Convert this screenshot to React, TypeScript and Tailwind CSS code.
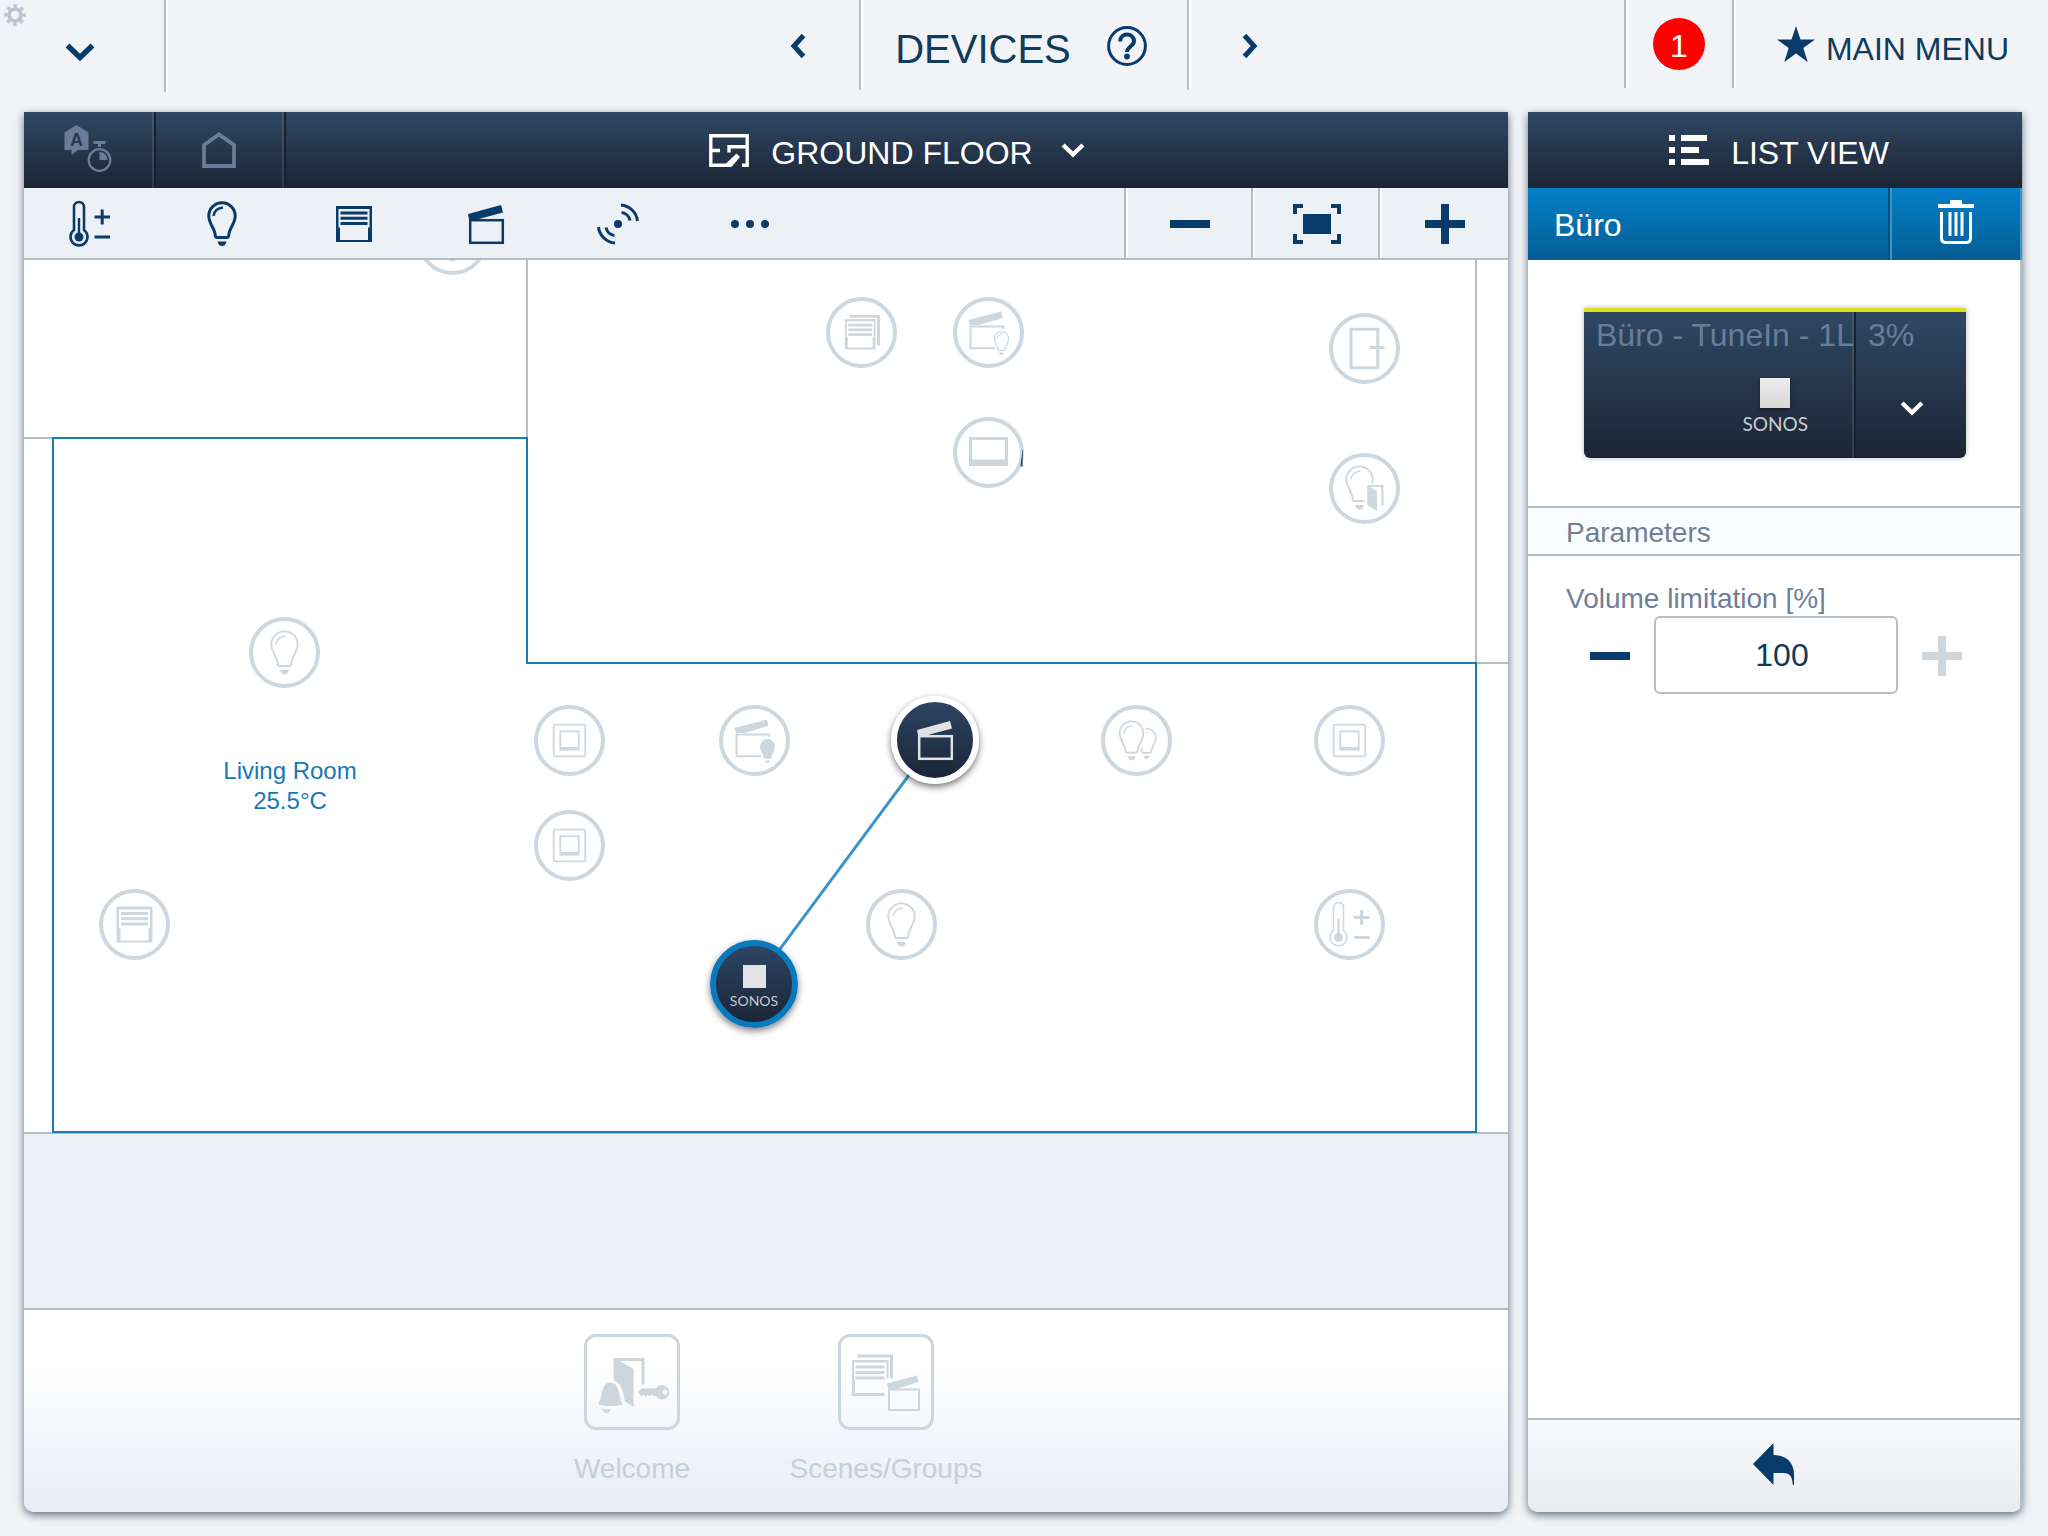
import { useState } from 'react';
import type { ReactNode } from 'react';

const NAVY = '#0a3c6b';

type IconProps = { weight?: number };

function Chevron({ dir, className }: { dir: 'down' | 'left' | 'right'; className?: string }) {
  const d = {
    down: 'M2.5 2.5 L15 14.5 L27.5 2.5',
    left: 'M13.5 2.5 L4 13 L13.5 23.5',
    right: 'M3.5 2.5 L13 13 L3.5 23.5',
  }[dir];
  return (
    <svg className={className} viewBox={dir === 'down' ? '0 0 30 19' : '0 0 17 26'} fill="none" stroke="currentColor" strokeWidth={dir === 'down' ? 5.5 : 5}>
      <path d={d} />
    </svg>
  );
}

// All device glyphs are drawn around 0,0 so they fit both toolbar and map pins

const BULB = 'M-5 13.5 H5 C6 13.5 6.5 12.7 6.7 11.7 C7 4 13.2 0 13.2 -8 A13.2 13.2 0 1 0 -13.2 -8 C-13.2 0 -7 4 -6.7 11.7 C-6.5 12.7 -6 13.5 -5 13.5 Z';
const BULB_BASE = 'M-4.5 17.5 H4.5 Q3.5 22 0 22 T-4.5 17.5 Z';

function Bulb({ weight = 1.8, fill = 'none' }: IconProps & { fill?: string }) {
  return (
    <g>
      <path d={BULB} fill={fill} stroke="currentColor" strokeWidth={weight} />
      <path d="M-8.5 -8 Q-7.5 -15.5 1 -16.5" fill="none" stroke="currentColor" strokeWidth={weight * 0.8} />
      <path d={BULB_BASE} fill="currentColor" />
    </g>
  );
}

function Thermo({ weight = 1.5 }: IconProps) {
  return (
    <g fill="none" stroke="currentColor">
      <path d="M-16 6 V-17 a5 5 0 0 1 10 0 V6 a8.5 8.5 0 1 1 -10 0 Z" strokeWidth={weight} />
      <path d="M-11 -6 V12" strokeWidth="2.4" />
      <circle cx="-11" cy="13" r="4.5" fill="currentColor" stroke="none" />
      <path d="M4.5 -7 H20 M12.2 -14.5 V0.5 M4.5 13 H20" strokeWidth="3" />
    </g>
  );
}

function Blinds() {
  return (
    <g fill="currentColor">
      <path d="M-18 -18 H18 V18 H-18 Z M-15.5 -15 V3.5 H-14 V16 H14 V3.5 H15.5 V-15 Z" fillRule="evenodd" />
      <path d="M-13.5 -12.5 h27 v3 h-27 z M-13.5 -7.200 h27 v3 h-27 z M-13.5 -2 h27 v3 h-27 z" />
    </g>
  );
}

function BlindsGroup() {
  return (
    <g fill="currentColor">
      <path d="M-12 -17.5 H18.5 V13 H15.5 V-14.7 H-12 Z" />
      <path d="M-16.5 -13.5 H14 V17 H-16.5 Z M-14.7 -11.3 V4.5 H-13.7 V15 H11.2 V4.5 H12.2 V-11.3 Z" fillRule="evenodd" />
      <path d="M-13.3 -8.8 h24 v2.8 h-24 z M-13.3 -4 h24 v2.8 h-24 z M-13.3 0.7 h24 v2.8 h-24 z" />
    </g>
  );
}

function Clapper() {
  return (
    <g>
      <path d="M-18 -10 L15 -19 L17 -11.5 L-9 -4.5 H-17 Z" fill="currentColor" />
      <rect x="-15.8" y="-3.8" width="32.6" height="22.6" fill="none" stroke="currentColor" strokeWidth="2.5" />
    </g>
  );
}

function ClapperBulb({ solid = false }: { solid?: boolean }) {
  return (
    <g>
      <path d="M-20 -12.5 L12.5 -21 L14 -14.5 L-10 -7.5 H-18.5 Z" fill="currentColor" />
      <path d="M14.8 -3.5 V-6 H-18 V15.7 H7" fill="none" stroke="currentColor" strokeWidth="2" />
      <g transform="translate(13 10.5) scale(.54)">
        {solid ? <Bulb fill="currentColor" /> : <Bulb weight={2.4} />}
      </g>
    </g>
  );
}

function Tablet() {
  return <path d="M-19.5 -15.5 H19.5 V13.5 H-19.5 Z M-16.5 -12.5 V7 H16.5 V-12.5 Z" fill="currentColor" fillRule="evenodd" />;
}

function Door() {
  return (
    <g fill="none" stroke="currentColor" strokeWidth="3">
      <path d="M13.3 -4.5 V-19.2 H-13.5 V19.2 H13.3 V2.5" />
      <path d="M5 -1 H20 M13.3 -6 V4" />
    </g>
  );
}

function BulbDoor() {
  return (
    <g>
      <g transform="translate(-5 -1)"><Bulb /></g>
      <path d="M0 -5 H22 V24 H0 Z" fill="#fff" />
      <path d="M2.7 -3.5 L12.5 3 V22.5 L2.7 16.5 Z" fill="currentColor" />
      <path d="M2.7 -2.5 H18 V17" fill="none" stroke="currentColor" strokeWidth="2" />
    </g>
  );
}

function TwoBulbs() {
  return (
    <g>
      <g transform="translate(10 3) scale(.7)"><Bulb weight={2.4} /></g>
      <g transform="translate(-5 0) scale(.9)">
        <path d={BULB} fill="#fff" stroke="#fff" strokeWidth="6" />
        <Bulb weight={2} />
      </g>
    </g>
  );
}

function Switch() {
  return (
    <g fill="none" stroke="currentColor" strokeWidth="1.8">
      <rect x="-15.8" y="-15.8" width="31.6" height="31.6" rx="1.5" />
      <rect x="-9.2" y="-9.2" width="18.4" height="18.4" />
      <path d="M-9.2 8 H9.2" strokeWidth="3" />
    </g>
  );
}

function Signal() {
  return (
    <g fill="none" stroke="currentColor" strokeWidth="3">
      <circle r="4" fill="currentColor" stroke="none" />
      <path d="M3 -19 A18 18 0 0 1 19.5 -3 M3.5 -11.5 A10 10 0 0 1 12 -3.5" />
      <path d="M-3 19 A18 18 0 0 1 -19.5 3 M-3.5 11.5 A10 10 0 0 1 -12 3.5" />
    </g>
  );
}

function Dots() {
  return (
    <g fill="currentColor">
      <circle cx="-15" r="4" />
      <circle r="4" />
      <circle cx="15" r="4" />
    </g>
  );
}

function Glyph({ children, className = 'size-12' }: { children: ReactNode; className?: string }) {
  return <svg className={className} viewBox="-24 -24 48 48">{children}</svg>;
}

const FILTERS = [
  { label: 'Climate', icon: <Thermo weight={2.6} /> },
  { label: 'Lights', icon: <Bulb weight={3} /> },
  { label: 'Blinds', icon: <Blinds /> },
  { label: 'Scenes', icon: <Clapper /> },
  { label: 'Sensors', icon: <Signal /> },
  { label: 'More', icon: <Dots /> },
];

// x/y are pin centres on the plan
const PIN_RADIUS = 35;
const PINS = [
  { x: 428, y: -21, label: 'Hall light', icon: <Bulb /> },
  { x: 837, y: 72, label: 'Blind group', icon: <BlindsGroup /> },
  { x: 964, y: 72, label: 'Light scene', icon: <ClapperBulb /> },
  { x: 964, y: 192, label: 'Panel', icon: <Tablet /> },
  { x: 1340, y: 88, label: 'Door', icon: <Door /> },
  { x: 1340, y: 228, label: 'Door light', icon: <BulbDoor /> },
  { x: 260, y: 392, label: 'Light', icon: <Bulb /> },
  { x: 110, y: 664, label: 'Blind', icon: <Blinds /> },
  { x: 545, y: 480, label: 'Switch 1', icon: <Switch /> },
  { x: 545, y: 585, label: 'Switch 2', icon: <Switch /> },
  { x: 730, y: 480, label: 'Scene light', icon: <ClapperBulb solid /> },
  { x: 1112, y: 480, label: 'Light group', icon: <TwoBulbs /> },
  { x: 1325, y: 480, label: 'Switch 3', icon: <Switch /> },
  { x: 877, y: 664, label: 'Ceiling light', icon: <Bulb /> },
  { x: 1325, y: 664, label: 'Thermostat', icon: <Thermo /> },
];

function TopBar() {
  return (
    <header className="relative grid h-28 grid-cols-[1fr_auto_1fr] items-start text-[#0f3b5c]">
      <button aria-label="Settings" className="absolute left-1 top-1 text-[#bcc5cf]">
        <svg className="size-[22px]" viewBox="-11 -11 22 22" fill="none" stroke="currentColor">
          <circle r="6" strokeWidth="3.6" />
          <circle r="9" strokeWidth="3.6" strokeDasharray="3.4 3.669" strokeDashoffset="1.7" />
        </svg>
      </button>
      <div className="flex">
        <button aria-label="Open menu" className="flex h-[92px] w-[166px] items-center justify-center border-r-2 border-[#b3bdc6] pt-3 pr-1 shadow-[2px_0_0_#fff]" style={{ color: NAVY }}>
          <Chevron dir="down" className="h-[19px] w-[30px]" />
        </button>
      </div>
      <div className="flex h-[90px]" style={{ color: NAVY }}>
        <button aria-label="Previous" className="flex w-[122px] items-center justify-center pt-0.5"><Chevron dir="left" className="h-[26px] w-[17px]" /></button>
        <div className="flex items-center gap-9 border-x-2 border-[#b3bdc6] pr-10 pl-8 shadow-[2px_0_0_#fff,inset_2px_0_0_#fff]">
          <h1 className="pt-2 pl-0.5 text-[40px] text-[#0f3b5c]">DEVICES</h1>
          <button aria-label="Help" className="pt-0.5">
            <svg className="size-10" viewBox="0 0 40 40" fill="none" stroke="currentColor">
              <circle cx="20" cy="20" r="18.4" strokeWidth="3" />
              <path d="M13.2 15.5 C13.2 6.3 27 6.5 27 15 C27 20.5 20 20.5 20 26" strokeWidth="4" />
              <circle cx="20" cy="30.5" r="2.9" fill="currentColor" stroke="none" />
            </svg>
          </button>
        </div>
        <button aria-label="Next" className="flex w-[122px] items-center justify-center pt-0.5"><Chevron dir="right" className="h-[26px] w-[17px]" /></button>
      </div>
      <div className="flex h-[88px] justify-end text-[32px]">
        <button className="flex w-[110px] items-center justify-center border-x-2 border-[#b3bdc6] shadow-[2px_0_0_#fff,inset_2px_0_0_#fff]" aria-label="1 message">
          <span className="flex size-[52px] items-center justify-center rounded-full bg-[#ff0000] pt-1 text-white">1</span>
        </button>
        <button className="flex items-center gap-[11px] pr-[39px] pl-[43px]">
          <svg className="h-9 w-[38px]" viewBox="0 0 38 36" fill={NAVY}>
            <path d="M19 0 L23.5 13.5 H38 L26.3 22 L30.8 36 L19 27.4 L7.2 36 L11.7 22 L0 13.5 H14.5 Z" />
          </svg>
          <span className="pt-2.5">MAIN MENU</span>
        </button>
      </div>
    </header>
  );
}

function FloorHeader() {
  const cell = 'flex items-center justify-center border-r-2 border-[#16202f] pr-0.5 text-[#6b7c98] shadow-[inset_-2px_0_0_rgba(255,255,255,0.1)]';
  return (
    <div className="flex h-[76px] bg-linear-to-b from-[#2f4864] to-[#1c2535] text-white">
      <button aria-label="Automation" className={cell + ' w-[132px]'}>
        <svg className="h-[50px] w-12" viewBox="0 0 48 50">
          <path d="M12.5 0 L24.5 7.5 V25 H14 L7.5 30 V25 H0.5 V7.5 Z" fill="currentColor" />
          <text x="12.5" y="21" textAnchor="middle" fontSize="18" fontWeight="bold" fill="#27394f">A</text>
          <path d="M29.5 16 H41.5 V19 H37 V22 H34 V19 H29.5 Z" fill="currentColor" />
          <circle cx="35.5" cy="35" r="10.8" fill="none" stroke="currentColor" strokeWidth="2.2" />
          <path d="M35.500 35 V27 A8 8 0 0 1 43.500 35 Z" fill="currentColor" />
        </svg>
      </button>
      <button aria-label="Home" className={cell + ' w-[130px]'}>
        <svg className="h-9 w-[34px]" viewBox="0 0 34 36" fill="none" stroke="currentColor" strokeWidth="3.8">
          <path d="M2 13 L17 2.4 L32 13 V34 H2 Z" />
        </svg>
      </button>
      <button className="flex flex-1 items-center justify-center text-[32px]">
        <svg className="h-[33px] w-10" viewBox="0 0 40 33" fill="none" stroke="currentColor" strokeWidth="3.4">
          <path d="M20 31.2 H1.8 V1.8 H38.2 M38.2 12.7 H20 V18.5" />
          <path d="M1.8 16.5 H11" />
          <path d="M38.2 0 V31.2 H33" />
          <path d="M17 29.500 L27.500 19.500 L31 23 L22.500 32.900 H17 Z" fill="currentColor" stroke="none" />
        </svg>
        <span className="ml-[22px] pt-1.5">GROUND FLOOR</span>
        <Chevron dir="down" className="ml-7 h-[15px] w-6" />
      </button>
    </div>
  );
}

function Toolbar() {
  const cell = 'flex items-center justify-center border-l-2 border-[#b3bdc6] pt-0.5 pl-0.5 shadow-[inset_2px_0_0_#fff]';
  return (
    <div className="flex h-[72px] border-b-2 border-[#b3bdc6] bg-[#edf1f6]" style={{ color: NAVY }}>
      <div className="flex flex-1">
        {FILTERS.map(f => (
          <button key={f.label} aria-label={f.label} className="flex w-[132px] items-center justify-center pt-0.5">
            <Glyph>{f.icon}</Glyph>
          </button>
        ))}
      </div>
      <button aria-label="Zoom out" className={cell + ' w-[127px]'}>
        <svg className="size-10" viewBox="0 0 40 40" fill="currentColor"><path d="M0 16 H40 V24 H0 Z" /></svg>
      </button>
      <button aria-label="Fit to screen" className={cell + ' w-[127px]'}>
        <svg className="h-10 w-12" viewBox="0 0 48 40" fill="none" stroke="currentColor" strokeWidth="4">
          <path d="M2 10 V2 H10 M38 2 H46 V10 M46 30 V38 H38 M10 38 H2 V30" />
          <path d="M10 10 H38 V30 H10 Z" fill="currentColor" stroke="none" />
        </svg>
      </button>
      <button aria-label="Zoom in" className={cell + ' w-[130px]'}>
        <svg className="size-10" viewBox="0 0 40 40" fill="currentColor"><path d="M16 0 H24 V16 H40 V24 H24 V40 H16 V24 H0 V16 H16 Z" /></svg>
      </button>
    </div>
  );
}

function FloorPlan() {
  return (
    <div className="relative min-h-[900px] flex-1 overflow-hidden bg-[#edf1f6]">
      <svg className="absolute inset-0 h-full w-full" fill="none">
        <rect width="100%" height="872" fill="#fff" />
        <g stroke="#b3bdc6" strokeWidth="2">
          <path d="M503 0 V178 M1452 0 V403 M0 178 H30" />
          <line x1="1452" x2="100%" y1="403" y2="403" />
          <line x1="0" x2="100%" y1="873" y2="873" />
        </g>
        <path d="M29 178 H503 V403 H1452 V872 H29 Z" stroke="#1b7ab2" strokeWidth="2" />
        <path d="M911 480 L730 724" stroke="#3a94c9" strokeWidth="3" />
      </svg>

      {PINS.map(p => (
        <button key={p.label} aria-label={p.label}
          className="absolute size-[71px] rounded-full border-4 border-[#cfd7de] bg-white text-[#cfd7de]"
          style={{ left: p.x - PIN_RADIUS, top: p.y - PIN_RADIUS }}>
          <svg className="size-[63px]" viewBox="-31.5 -31.5 63 63">{p.icon}</svg>
        </button>
      ))}
      {/* stray shadow edge beside the panel pin */}
      <svg className="absolute top-[190px] left-[996px] h-[17px] w-[3px]" viewBox="0 0 3 17"><path d="M2.500 0 L3 0 L2.500 17 L0.500 16 Z" fill="#2b4560" /></svg>

      <div className="absolute top-[496px] left-[266px] -translate-x-1/2 text-center text-[24px] leading-[30px] whitespace-nowrap text-[#1579b5]">
        <p>Living Room</p>
        <p>25.5°C</p>
      </div>

      <button aria-label="Scene"
        className="absolute top-[480px] left-[911px] flex size-[88px] -translate-x-1/2 -translate-y-1/2 items-center justify-center rounded-full border-[6px] border-white bg-linear-to-b from-[#2c4563] to-[#1b2638] text-[#dfe1e4] shadow-[0_3px_7px_rgba(0,0,0,0.55)]">
        <Glyph><Clapper /></Glyph>
      </button>
      <button
        className="absolute top-[724px] left-[730px] flex size-[88px] -translate-x-1/2 -translate-y-1/2 flex-col items-center justify-center gap-1 rounded-full border-[6px] border-[#0b79bd] bg-linear-to-b from-[#2c4563] to-[#1b2638] pt-1.5 shadow-[0_3px_7px_rgba(0,0,0,0.5)]">
        <span className="size-[23px] bg-[#e2e3e5]" />
        <span className="font-[Lato,sans-serif] text-[14px] leading-[18px] text-[#c3c8cf]">SONOS</span>
      </button>
    </div>
  );
}

function BottomBar() {
  const item = 'flex w-[254px] flex-col items-center gap-[18px]';
  const box = 'size-24 rounded-[12px] border-[3px] border-[#cdd6dd]';
  return (
    <div className="flex h-[204px] justify-center border-t-2 border-[#b3bdc6] bg-linear-to-b from-white from-25% to-[#e8ecf5] pt-6 pr-3.5 text-[28px] text-[#c6cfd8]">
      <button className={item}>
        <span className={box}>
          <svg className="size-[90px]" viewBox="3 3 90 90" fill="#cdd6dd">
            <path d="M29.6 24 H60.5 V50.5 H57.5 V27 H36 L49.6 35 V73 L41 67.5 C39 60 38.5 49 29.6 46.5 Z" />
            <path d="M14 70.5 C19 64 16.5 48.5 26.5 48.5 C36.5 48.5 34 64 39 70.5 Q26.5 73.5 14 70.5 Z" />
            <path d="M18 74.5 Q22.5 76 27 75 Q26 79 22.5 79 T18 74.5 Z" />
            <path d="M78 51 a7.2 7.2 0 1 1 -6 11 h-2.500 l-2 -1.500 l-2 2 l-2 -2 l-2 2 l-2 -2 l-2 2 l-3.500 -4.200 l3.500 -3.800 h14.500 a7.2 7.2 0 0 1 6 -3.500 Z M81 55.700 a2.500 2.500 0 1 0 .01 0 Z" fillRule="evenodd" />
          </svg>
        </span>
        <span>Welcome</span>
      </button>
      <button className={item}>
        <span className={box}>
          <svg className="size-[90px]" viewBox="3 3 90 90" fill="#cdd6dd">
            <path d="M19.5 20.5 H55 V44.500 H52 V23.500 H19.500 Z" />
            <path d="M14 26 H50.500 V44.500 H48.500 V28.500 H16 V46 H17 V59 H46.500 V62 H14 Z" />
            <path d="M17.500 31.500 h29 v3 h-29 z M17.500 37 h29 v3 h-29 z M17.500 42.500 h29 v3 h-29 z" />
            <path d="M49 49.500 L79 41.500 L80.500 48 L58 55 H50.500 Z" />
            <rect x="51" y="55.500" width="30" height="20.500" fill="none" stroke="#cdd6dd" strokeWidth="2" />
          </svg>
        </span>
        <span>Scenes/Groups</span>
      </button>
    </div>
  );
}

function DeviceCard() {
  return (
    <div className="flex h-[150px] rounded-b-[6px] border-t-4 border-[#dbe21a] bg-linear-to-b from-[#2f4864] to-[#1c2535] text-[32px] text-[#6a7d98] shadow-[0_0_5px_rgba(30,50,80,0.35)]">
      <div className="flex w-[272px] flex-col justify-between overflow-hidden border-r-2 border-[#162131] shadow-[inset_-2px_0_0_rgba(255,255,255,0.1)]">
        <p className="pt-[5px] pl-3 leading-9 whitespace-nowrap">Büro - TuneIn - 1L</p>
        <div className="mr-[46px] mb-6 flex flex-col items-center gap-1.5 self-end">
          <span className="size-[30px] bg-linear-to-b from-[#ececec] to-[#d9d9d9] shadow-[0_2px_4px_rgba(0,0,0,0.4)]" />
          <span className="font-[Lato,sans-serif] text-[19px] leading-5 text-[#c9cdd2]">SONOS</span>
        </div>
      </div>
      <div className="flex flex-1 flex-col justify-between">
        <p className="pt-[5px] pl-3 leading-9">3%</p>
        <button aria-label="Expand device" className="mb-[42px] self-center pl-0.5 text-white"><Chevron dir="down" className="h-[15px] w-6" /></button>
      </div>
    </div>
  );
}

function ListView() {
  const [volume, setVolume] = useState(100);
  const change = (v: number) => setVolume(Math.min(100, Math.max(0, v)));

  return (
    <aside className="flex w-[494px] flex-col overflow-hidden rounded-b-[10px] bg-white shadow-[0_3px_8px_rgba(60,80,100,0.8)]">
      <div className="flex h-[76px] items-center justify-center gap-[22px] bg-linear-to-b from-[#2f4864] to-[#1c2535] pl-2 text-[32px] text-white">
        <svg className="h-[30px] w-10" viewBox="0 0 40 30" fill="currentColor">
          <path d="M0 0 h6 v6 h-6 z M0 12 h6 v6 h-6 z M0 24 h6 v6 h-6 z M12 0 h26 v6 h-26 z M12 12 h18 v6 h-18 z M12 24 h28 v6 h-28 z" />
        </svg>
        <h2 className="pt-1.5">LIST VIEW</h2>
      </div>
      <div className="flex h-[72px] bg-linear-to-b from-[#0480c9] to-[#045d93] text-[32px] text-white">
        <div className="flex flex-1 items-center border-r-2 border-[#04517f] pt-0.5 pl-[26px]">Büro</div>
        <button aria-label="Delete" className="flex w-[132px] items-center justify-center border-x-2 border-[#3d94c8] pb-1">
          <svg className="h-11 w-9" viewBox="0 0 36 44" fill="none" stroke="currentColor" strokeWidth="3">
            <path d="M0 6 H36" strokeWidth="4" />
            <path d="M12 2 H24" strokeWidth="4" />
            <path d="M3.500 12 V38 Q3.500 42.500 8 42.500 H28 Q32.500 42.500 32.500 38 V12 M12 12 V36 M18 12 V36 M24 12 V36" />
          </svg>
        </button>
      </div>

      <div className="flex flex-1 flex-col border-r-2 border-[#b3bdc6]">
        <div className="px-14 pt-12 pr-[54px] pb-12"><DeviceCard /></div>
        <h3 className="flex h-[50px] items-center border-y-2 border-[#b3bdc6] bg-[#fafcfe] pt-1 pl-[38px] text-[28px] text-[#6f7f95]">Parameters</h3>
        <div className="pt-[26px]">
          <label htmlFor="volume" className="block pl-[38px] text-[28px] leading-[34px] text-[#6f7f95]">Volume limitation [%]</label>
          <div className="flex items-center justify-center gap-6 pl-1">
            <button aria-label="Decrease" onClick={() => change(volume - 1)} className="pt-0.5" style={{ color: NAVY }}>
              <svg className="size-10" viewBox="0 0 40 40" fill="currentColor"><path d="M0 16 H40 V24 H0 Z" /></svg>
            </button>
            <input id="volume" type="text" value={volume} onChange={e => change(Number(e.target.value) || 0)}
              className="h-[78px] w-[244px] rounded-[6px] border-2 border-[#b3bdc6] bg-white pl-3 text-center text-[32px] text-[#0f3b5c]" />
            <button aria-label="Increase" onClick={() => change(volume + 1)} className="pt-0.5 text-[#cfd7de]">
              <svg className="size-10" viewBox="0 0 40 40" fill="currentColor"><path d="M16 0 H24 V16 H40 V24 H24 V40 H16 V24 H0 V16 H16 Z" /></svg>
            </button>
          </div>
        </div>
      </div>

      <button aria-label="Back" className="flex h-[94px] items-center justify-center border-t-2 border-r-2 border-[#b3bdc6] bg-linear-to-b from-[#f8f9fd] to-[#e9ebef] pb-1" style={{ color: NAVY }}>
        <svg className="size-[42px]" viewBox="0 0 42 42" fill="currentColor">
          <path d="M0 21 L20.500 0 V12 C33 12 41 20 41 31 V42 H39.800 C39.300 32.500 36 30 30 30 H20.500 V42 Z" />
        </svg>
      </button>
    </aside>
  );
}

export default function App() {
  return (
    <div className="flex min-h-screen flex-col bg-[#f1f3f7] pb-6 font-['Liberation_Sans',Arial,sans-serif]">
      <TopBar />
      <main className="flex flex-1 gap-5 pr-[26px] pl-6">
        <section className="flex min-w-0 flex-1 flex-col overflow-hidden rounded-b-[10px] shadow-[0_3px_8px_rgba(60,80,100,0.8)]">
          <FloorHeader />
          <Toolbar />
          <FloorPlan />
          <BottomBar />
        </section>
        <ListView />
      </main>
    </div>
  );
}
